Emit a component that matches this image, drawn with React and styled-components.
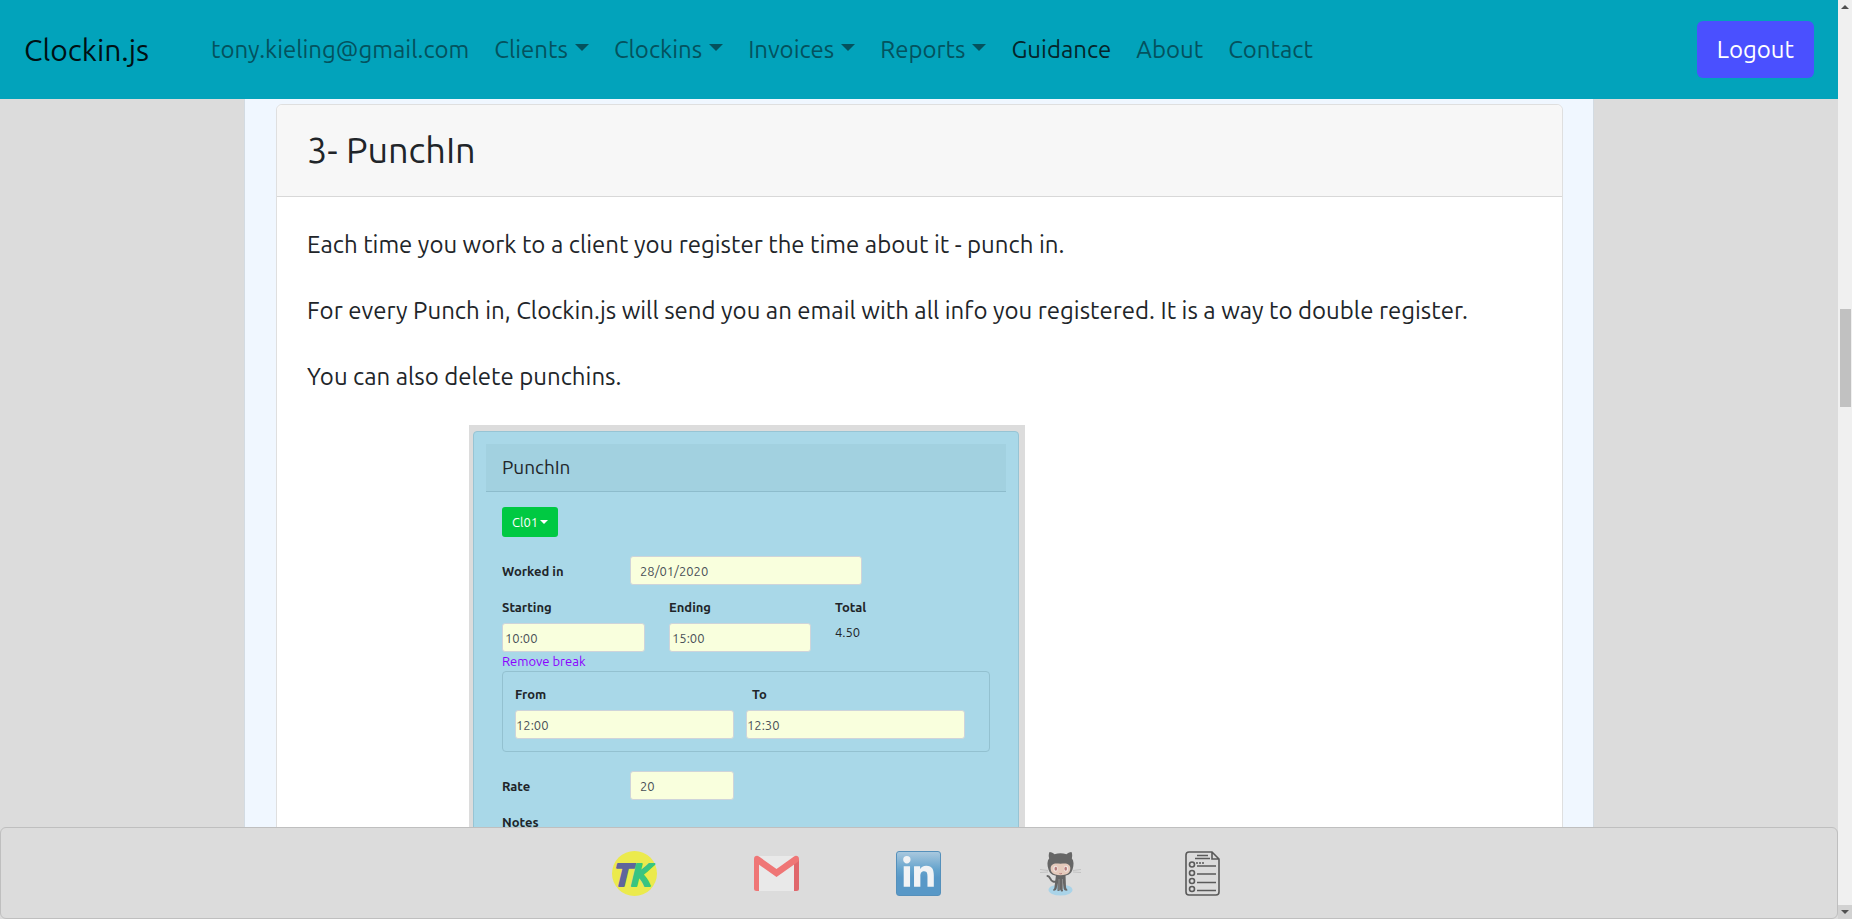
import React from "react";
import styled, { createGlobalStyle } from "styled-components";
import { FaLinkedinIn } from "react-icons/fa";

const GlobalStyle = createGlobalStyle`
  *, *::before, *::after { box-sizing: border-box; }
  body {
    margin: 0;
    background: #dcdcdc;
    color: #212529;
    font-family: Ubuntu, "Noto Sans", sans-serif;
    font-size: 24px;
    line-height: 36px;
  }
  button, input, textarea { font: inherit; color: inherit; margin: 0; }
  a { color: inherit; text-decoration: none; }
  h2, h3, p { margin: 0; font-weight: 400; }
`;

const Shell = styled.div`
  display: flex;
  height: 100vh;
  overflow: hidden;
`;

const Page = styled.div`
  flex: 1;
  min-width: 0;
  display: flex;
  flex-direction: column;
`;

/* Navigation bar */
const NavBar = styled.header`
  flex: none;
  display: flex;
  align-items: center;
  padding: 21px 24px;
  background: #02a3bb;
`;

const Brand = styled.a`
  margin-right: 62px;
  color: #001014;
  font-size: 30px;
`;

const NavLinks = styled.nav`
  flex: 1;
  display: flex;
  gap: 25px;
`;

const NavLink = styled.a`
  color: ${(p) => (p.$active ? "#05252b" : "#04525e")};
`;

const NavToggle = styled.button`
  display: flex;
  align-items: center;
  gap: 7px;
  padding: 0;
  border: 0;
  background: none;
  color: #04525e;
`;

const Caret = styled.span`
  border: solid transparent;
  border-top-color: currentColor;
  border-width: ${(p) => (p.$small ? "4px 4px 0" : "7px 7px 0")};
  margin-bottom: ${(p) => (p.$small ? "0" : "4px")};
`;

const LogoutButton = styled.button`
  padding: 10px 20px;
  height: 57px;
  border: 0;
  border-radius: 6px;
  background: #4a50ff;
  color: #fff;
`;

/* Guidance content */
const Main = styled.main`
  flex: 1;
  min-height: 0;
  overflow: hidden;
  padding: 0 24px;
`;

const Column = styled.div`
  max-width: 1350px;
  margin: 0 auto;
  padding: 5px 30px 5px 31px;
  border: solid #d3dbe2;
  border-width: 0 1px;
  background: #f0f7ff;
`;

const Card = styled.section`
  border: 1px solid #dfdfdf;
  border-radius: 6px;
  background: #fff;
`;

const CardHeader = styled.h2`
  padding: 18px 30px 20px;
  border-bottom: 1px solid #d8d8d8;
  border-radius: 6px 6px 0 0;
  background: #f7f7f7;
  font-size: 36px;
  line-height: 53px;
`;

const CardBody = styled.div`
  display: flex;
  flex-direction: column;
  gap: 30px;
  padding: 30px;
`;

/* Punch-in form */
const Figure = styled.div`
  width: 556px;
  margin-left: 162px;
  padding: 6px 6px 6px 4px;
  background: #dcdcdc;
  font-size: 13px;
  line-height: 18px;
`;

const FormCard = styled.form`
  padding: 12px;
  border: 1px solid #97c4d4;
  border-radius: 4px;
  background: #a9d8e8;
`;

const FormTitle = styled.h3`
  padding: 10px 16px;
  border-bottom: 1px solid #8dbccc;
  background: #a2d1e0;
  font-size: 19px;
  line-height: 27px;
`;

const FormBody = styled.div`
  display: flex;
  flex-direction: column;
  padding: 15px 16px;
`;

const ClientButton = styled.button`
  align-self: flex-start;
  display: flex;
  align-items: center;
  gap: 2px;
  height: 30px;
  padding: 0 10px;
  border: 0;
  border-radius: 3px;
  background: #00c942;
  color: #fff;
`;

const Row = styled.div`
  display: flex;
  align-items: center;
  margin-top: 19px;
`;

const Label = styled.label`
  width: ${(p) => (p.$wide ? "128px" : "auto")};
  padding-left: ${(p) => (p.$inset ? "6px" : "0")};
  font-weight: 700;
`;

const Field = styled.input`
  width: ${(p) => p.$width}px;
  height: 29px;
  padding: 0 ${(p) => (p.$pad === undefined ? 9 : p.$pad)}px;
  border: 1px solid #ced4da;
  border-radius: 3px;
  background: #f9ffdd;
  color: #495057;
`;

const Times = styled.div`
  display: grid;
  grid-template-columns: 143px 142px 1fr;
  column-gap: 24px;
  margin-top: 13px;
`;

const Stack = styled.div`
  display: flex;
  flex-direction: column;
  gap: 7px;
`;

const NotesStack = styled(Stack)`
  margin-top: 13px;
`;

const NotesArea = styled.textarea`
  height: 60px;
  border: 1px solid #ced4da;
  border-radius: 3px;
  background: #f9ffdd;
  resize: none;
`;

const RemoveLink = styled.a`
  align-self: flex-start;
  color: #8b00ff;
  line-height: 19px;
`;

const BreakBox = styled.fieldset`
  display: flex;
  gap: 12px;
  margin: 0;
  padding: 13px 12px 12px;
  border: 1px solid #93c1d0;
  border-radius: 4px;
`;

/* Footer */
const Footer = styled.footer`
  flex: none;
  display: flex;
  justify-content: center;
  align-items: center;
  gap: 97px;
  height: 92px;
  padding-right: 1px;
  border: 1px solid #bfbfbf;
  border-radius: 6px;
  background: #dcdcdc;
`;

const IconLink = styled.a`
  display: flex;
  width: 45px;
  height: 45px;
`;

const LinkedInTile = styled.span`
  display: flex;
  align-items: center;
  justify-content: center;
  width: 45px;
  height: 45px;
  border: 1px solid #5590bb;
  border-radius: 3px;
  background: linear-gradient(#a9c8de, #66a4cd 40%, #5898c7 60%);
  color: #f1f3f5;
`;

/* Page scrollbar */
const ScrollTrack = styled.div`
  flex: none;
  width: 14px;
  display: flex;
  flex-direction: column;
  align-items: center;
  background: #f0f0f0;
`;

const ScrollStep = styled.button`
  display: flex;
  align-items: center;
  justify-content: center;
  width: 14px;
  height: 14px;
  padding: 0;
  border: 0;
  background: ${(p) => (p.$shaded ? "#d2d2d2" : "#f0f0f0")};
`;

const ScrollRail = styled.div`
  flex: 1;
  display: flex;
  flex-direction: column;
`;

const ScrollBefore = styled.div`
  flex: 295;
`;

const ScrollThumb = styled.div`
  flex: 98;
  width: 11px;
  background: #c1c1c1;
`;

const ScrollAfter = styled.div`
  flex: 498;
`;

function TkLogo() {
  return (
    <svg width="45" height="45" viewBox="0 0 45 45" aria-hidden="true">
      <circle cx="22.5" cy="22.5" r="22.5" fill="#ebea4d" />
      <g fontFamily="Ubuntu, sans-serif" fontWeight="700" fontStyle="italic" fontSize="32" strokeWidth="2" strokeLinejoin="round">
        <text x="2" y="35" fill="#5f659c" stroke="#5f659c">T</text>
        <text x="19" y="35" fill="#39c481" stroke="#39c481">K</text>
      </g>
    </svg>
  );
}

function GmailLogo() {
  return (
    <svg width="45" height="45" viewBox="0 0 45 45" aria-hidden="true">
      <path d="M3 5h39v35H3z" fill="#e9e9e9" />
      <path d="M0 8v29.500Q0 40 2.500 40H5V13z" fill="#ef7676" />
      <path d="M45 8v29.500Q45 40 42.500 40H40V13z" fill="#e0676c" />
      <path d="M0 8c0-3 3-4 5-2.500L22.500 18 40 5.500C42 4 45 5 45 8c0 1.500-.5 2.500-2 3.500L22.500 26 2 11.500C.5 10.500 0 9.500 0 8z" fill="#ef7676" />
    </svg>
  );
}

function Octocat() {
  return (
    <svg width="45" height="45" viewBox="0 0 45 45" aria-hidden="true">
      <ellipse cx="22.500" cy="39" rx="12" ry="5.500" fill="#a9d3e8" />
      <path d="M9.500 25c3 0 2.500 5 5.500 5.500 2 .5 4 0 5-.5" fill="none" stroke="#666" strokeWidth="2" strokeLinecap="round" />
      <path d="M18 24h9.500l.5 12c.2 2 1.500 2 1.500 3.500-2 .5-4-.5-4-2.500l-.5-5v8c-1.500 1.500-2.500 0-2.500-1.500-.5 1.500-2 1.500-3 1.500v-8l-.7 5c-.3 2-2 3-3.800 2.500 0-1.500 1.500-1.500 1.500-3.500z" fill="#666" />
      <path d="M21 28v11M24.500 28v11" stroke="#8b8b8b" strokeWidth="1" />
      <path d="M11.500 1c2 0 4 1.300 5 2.200 4-1.200 8-1.200 12 0 1-1 3-2.200 5-2.200.9 2 .9 4.500.3 6.200C36 10 36 14 34.500 18.500 33 23.500 29 25 22.500 25S12 23.500 10.500 18.500C9 14 9 10 11.200 7.200 10.500 5.500 10.600 3 11.500 1z" fill="#666" />
      <path d="M15.500 13c2.500-1 4.500-.3 7-.3s4.500-.7 7 .3c3.500 1.300 3.500 6 1.500 8.500-1.700 2-4.500 2.700-8.500 2.700s-6.800-.7-8.500-2.700C12 19 12 14.300 15.500 13z" fill="#e5cabc" />
      <ellipse cx="17.500" cy="17.700" rx="2.200" ry="3" fill="#f0e6e3" />
      <ellipse cx="28" cy="17.700" rx="2.200" ry="3" fill="#f0e6e3" />
      <ellipse cx="17.800" cy="17.700" rx="1.300" ry="2" fill="#b77b7b" />
      <ellipse cx="27.700" cy="17.700" rx="1.300" ry="2" fill="#b77b7b" />
      <path d="M21.500 22.500q1.200.7 2.400 0" fill="none" stroke="#b77b7b" />
      <path d="M2 18.500l8 1M2 21.500l8-.5M43 18.500l-8 1M43 21.500l-8-.5" stroke="#c2c2c2" strokeWidth="1" />
    </svg>
  );
}

function ListIcon() {
  return (
    <svg width="45" height="45" viewBox="0 0 45 45" aria-hidden="true" fill="none" stroke="#5a5a5a" strokeWidth="1.600">
      <path d="M32 1H9Q6 1 6 4v37q0 3 3 3h27q3 0 3-3V8zV8h7" />
      <path d="M17 4.500h11M15 7.500h15M17 15h19M17 23h19M17 31.500h19M17 39.500h19" />
      <path d="M16 12h8" strokeDasharray="2 1" />
      <circle cx="12" cy="13.500" r="2.500" />
      <circle cx="12" cy="22" r="2.500" />
      <circle cx="12" cy="30" r="2.500" />
      <circle cx="12" cy="38" r="2.500" />
    </svg>
  );
}

function Arrow({ up }) {
  return (
    <svg width="8" height="4" viewBox="0 0 8 4" aria-hidden="true">
      <path d={up ? "M0 4 4 0l4 4z" : "M0 0h8L4 4z"} fill="#505050" />
    </svg>
  );
}

function Toggle({ children }) {
  return (
    <NavToggle type="button" aria-haspopup="menu">
      {children}
      <Caret />
    </NavToggle>
  );
}

function PunchInForm() {
  return (
    <Figure>
      <FormCard onSubmit={(e) => e.preventDefault()}>
        <FormTitle>PunchIn</FormTitle>
        <FormBody>
          <ClientButton type="button" aria-haspopup="menu">
            Cl01
            <Caret $small />
          </ClientButton>
          <Row>
            <Label $wide htmlFor="worked">Worked in</Label>
            <Field id="worked" $width={232} defaultValue="28/01/2020" />
          </Row>
          <Times>
            <Stack>
              <Label htmlFor="starting">Starting</Label>
              <Field id="starting" $pad={2} $width={143} defaultValue="10:00" />
            </Stack>
            <Stack>
              <Label htmlFor="ending">Ending</Label>
              <Field id="ending" $pad={2} $width={142} defaultValue="15:00" />
            </Stack>
            <Stack>
              <Label as="strong">Total</Label>
              <span>4.50</span>
            </Stack>
          </Times>
          <RemoveLink href="#break">Remove break</RemoveLink>
          <BreakBox id="break">
            <Stack>
              <Label htmlFor="from">From</Label>
              <Field id="from" $pad={0} $width={219} defaultValue="12:00" />
            </Stack>
            <Stack>
              <Label $inset htmlFor="to">To</Label>
              <Field id="to" $pad={0} $width={219} defaultValue="12:30" />
            </Stack>
          </BreakBox>
          <Row>
            <Label $wide htmlFor="rate">Rate</Label>
            <Field id="rate" $width={104} defaultValue="20" />
          </Row>
          <NotesStack>
            <Label htmlFor="notes">Notes</Label>
            <NotesArea id="notes" />
          </NotesStack>
        </FormBody>
      </FormCard>
    </Figure>
  );
}

export default function App() {
  return (
    <>
      <GlobalStyle />
      <Shell>
        <Page>
          <NavBar>
            <Brand href="#home">Clockin.js</Brand>
            <NavLinks>
              <NavLink href="#user">tony.kieling@gmail.com</NavLink>
              <Toggle>Clients</Toggle>
              <Toggle>Clockins</Toggle>
              <Toggle>Invoices</Toggle>
              <Toggle>Reports</Toggle>
              <NavLink $active href="#guidance">Guidance</NavLink>
              <NavLink href="#about">About</NavLink>
              <NavLink href="#contact">Contact</NavLink>
            </NavLinks>
            <LogoutButton type="button">Logout</LogoutButton>
          </NavBar>
          <Main>
            <Column>
              <Card>
                <CardHeader>3- PunchIn</CardHeader>
                <CardBody>
                  <p>Each time you work to a client you register the time about it - punch in.</p>
                  <p>
                    For every Punch in, Clockin.js will send you an email with all info you registered. It is a way to
                    double register.
                  </p>
                  <p>You can also delete punchins.</p>
                  <PunchInForm />
                </CardBody>
              </Card>
            </Column>
          </Main>
          <Footer>
            <IconLink href="#tk" aria-label="Website"><TkLogo /></IconLink>
            <IconLink href="#gmail" aria-label="Gmail"><GmailLogo /></IconLink>
            <IconLink href="#linkedin" aria-label="LinkedIn">
              <LinkedInTile><FaLinkedinIn size={35} /></LinkedInTile>
            </IconLink>
            <IconLink href="#github" aria-label="GitHub"><Octocat /></IconLink>
            <IconLink href="#resume" aria-label="Resume"><ListIcon /></IconLink>
          </Footer>
        </Page>
        <ScrollTrack>
          <ScrollStep type="button" aria-label="Scroll up"><Arrow up /></ScrollStep>
          <ScrollRail>
            <ScrollBefore />
            <ScrollThumb />
            <ScrollAfter />
          </ScrollRail>
          <ScrollStep $shaded type="button" aria-label="Scroll down"><Arrow /></ScrollStep>
        </ScrollTrack>
      </Shell>
    </>
  );
}
